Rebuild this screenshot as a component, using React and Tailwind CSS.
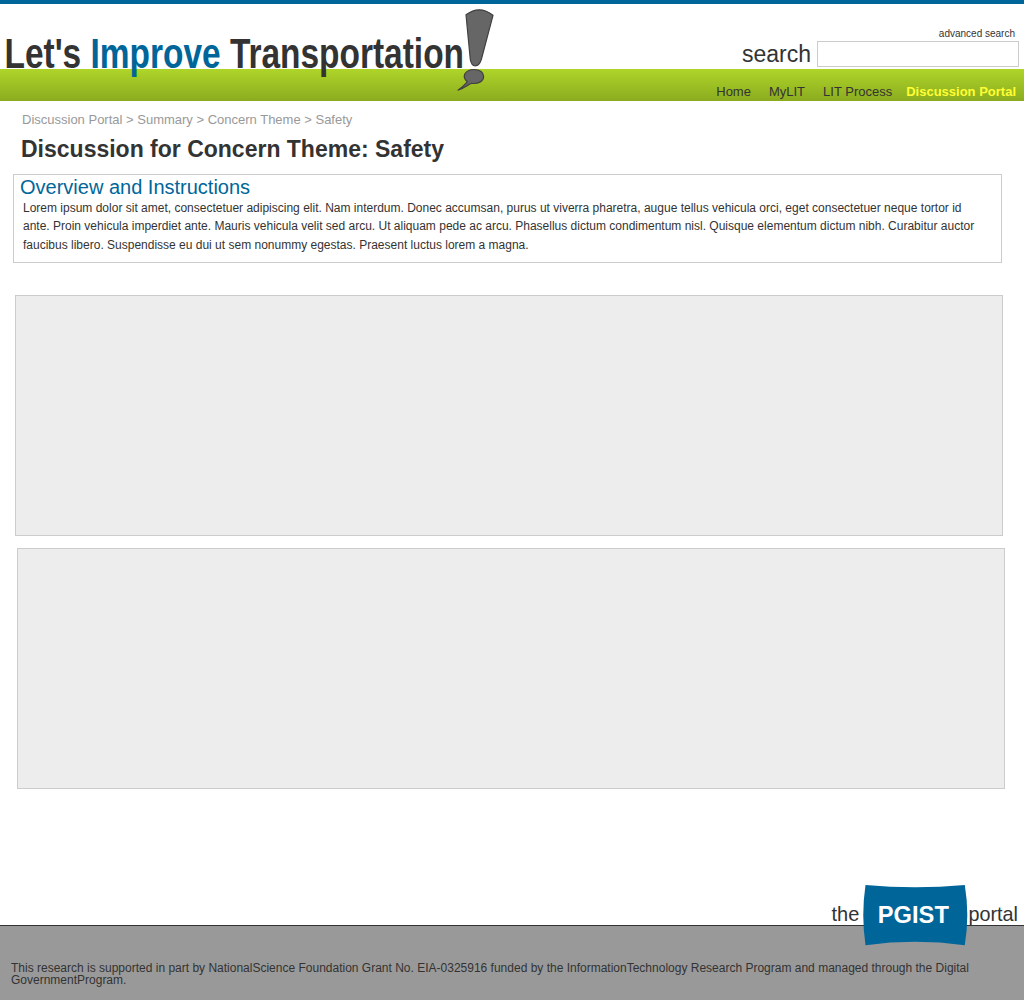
const navItems = ["Home", "MyLIT", "LIT Process"];

function Logo() {
  return (
    <svg className="h-[97px] w-[500px]" viewBox="0 4 500 97" role="img" aria-label="Let's Improve Transportation!">
      <text
        className="font-['Liberation_Sans',sans-serif] text-[42.5px] font-bold whitespace-pre"
        transform="translate(4.5 68) scale(0.787 1)"
        fill="#333333"
      >
        Let's <tspan fill="#006699">Improve</tspan> Transportation
      </text>
      <g fill="#666666" stroke="#404040" strokeWidth="1.2" strokeLinejoin="round">
        <path d="M466 14.8Q479.500 4.600 493 15.300L481.300 59.500Q479.200 65.800 475.300 65.800Q471.300 65.800 470.300 59.500Z" />
        <path d="M467.300 81.800C461.500 77 464.500 69.500 474.200 69.500C480 69.500 483.600 72.700 483.600 76.500C483.600 81.500 478 84.200 471.500 83.300C467 85.500 464 88.500 458 90.200C461 88 465 84.500 467.300 81.800Z" />
      </g>
    </svg>
  );
}

function Header() {
  return (
    <header className="flex h-[101px] justify-between bg-[linear-gradient(to_bottom,#006699_0,#006699_4px,#ffffff_4px,#ffffff_69px,#afd529_69px,#8bab1f_101px)] pt-1">
      <Logo />
      <div className="flex flex-col items-end">
        <a className="mt-[23px] mr-[9px] text-[10px] leading-[14px]">advanced search</a>
        <label className="mr-[5px] flex h-[26px] items-center">
          <span className="mr-[6px] text-[23px] leading-[26px]">search</span>
          <input className="h-[26px] w-[202px] border border-[#cccccc] bg-white px-1 text-sm outline-none" />
        </label>
        <nav className="mt-[17px] mr-2 flex text-[13px] leading-[15px]">
          {navItems.map((item) => (
            <a key={item} className="mr-[18px] nth-[3]:mr-[14px]">{item}</a>
          ))}
          <a className="font-bold text-[#ffff33]">Discussion Portal</a>
        </nav>
      </div>
    </header>
  );
}

function Overview() {
  return (
    <section className="mt-[11px] ml-[13px] h-[89px] w-[989px] border border-[#cccccc] pl-[6px]">
      <h2 className="text-[20px] leading-[24px] text-[#006699]">Overview and Instructions</h2>
      <div className="ml-[3px] text-[12px] whitespace-nowrap">
        <p className="leading-[18px]">
          Lorem ipsum dolor sit amet, consectetuer adipiscing elit. Nam interdum. Donec accumsan, purus ut viverra pharetra, augue tellus vehicula orci, eget consectetuer neque tortor id
        </p>
        <p className="leading-[18px]">
          ante. Proin vehicula imperdiet ante. Mauris vehicula velit sed arcu. Ut aliquam pede ac arcu. Phasellus dictum condimentum nisl. Quisque elementum dictum nibh. Curabitur auctor
        </p>
        <p className="mt-px leading-[18px]">
          faucibus libero. Suspendisse eu dui ut sem nonummy egestas. Praesent luctus lorem a magna.
        </p>
      </div>
    </section>
  );
}

function PortalBadge() {
  return (
    <div className="flex h-[60px] items-start justify-end pr-[6px] text-[20px] leading-[24px]">
      <span className="mt-[17px] mr-[3.5px]">the</span>
      <div className="relative z-10 flex h-[61px] w-[105px] shrink-0 justify-center">
        <svg className="absolute inset-0" width="105" height="61" viewBox="0 0 105 61">
          <path d="M2.500 0Q52 4.500 101.800 0Q106.800 30 101.800 60.200Q52 53.500 2.500 60.200Q-2 30 2.500 0Z" fill="#006699" />
        </svg>
        <span className="relative mt-[16px] mr-[4px] text-[23.7px] leading-[28px] font-bold text-white">PGIST</span>
      </div>
      <span className="mt-[17px] ml-[0.7px] text-[19.8px]">portal</span>
    </div>
  );
}

export default function App() {
  return (
    <div className="flex h-[1000px] w-[1024px] flex-col overflow-hidden bg-white font-['Liberation_Sans',sans-serif] text-[#333333]">
      <Header />
      <main className="flex-1">
        <p className="mt-[11px] ml-[22px] text-[13px] leading-[15px] text-[#999999]">
          Discussion Portal &gt; Summary &gt; Concern Theme &gt; Safety
        </p>
        <h1 className="mt-[8px] ml-[21px] text-[23px] leading-[28px] font-bold">Discussion for Concern Theme: Safety</h1>
        <Overview />
        <section className="mt-8 ml-[15px] h-[241px] w-[988px] border border-[#cccccc] bg-[#ededed]" />
        <section className="mt-3 ml-[17px] h-[241px] w-[988px] border border-[#cccccc] bg-[#ededed]" />
      </main>
      <div className="-mb-[20px]">
        <PortalBadge />
      </div>
      <footer className="h-[75px] border-t border-[#333333] bg-[#999999] pt-[36px] pl-[11px] text-[12px] leading-[12px] whitespace-nowrap">
        This research is supported in part by NationalScience Foundation Grant No. EIA-0325916 funded by the InformationTechnology Research Program and managed through the Digital
        <br />
        GovernmentProgram.
      </footer>
    </div>
  );
}
